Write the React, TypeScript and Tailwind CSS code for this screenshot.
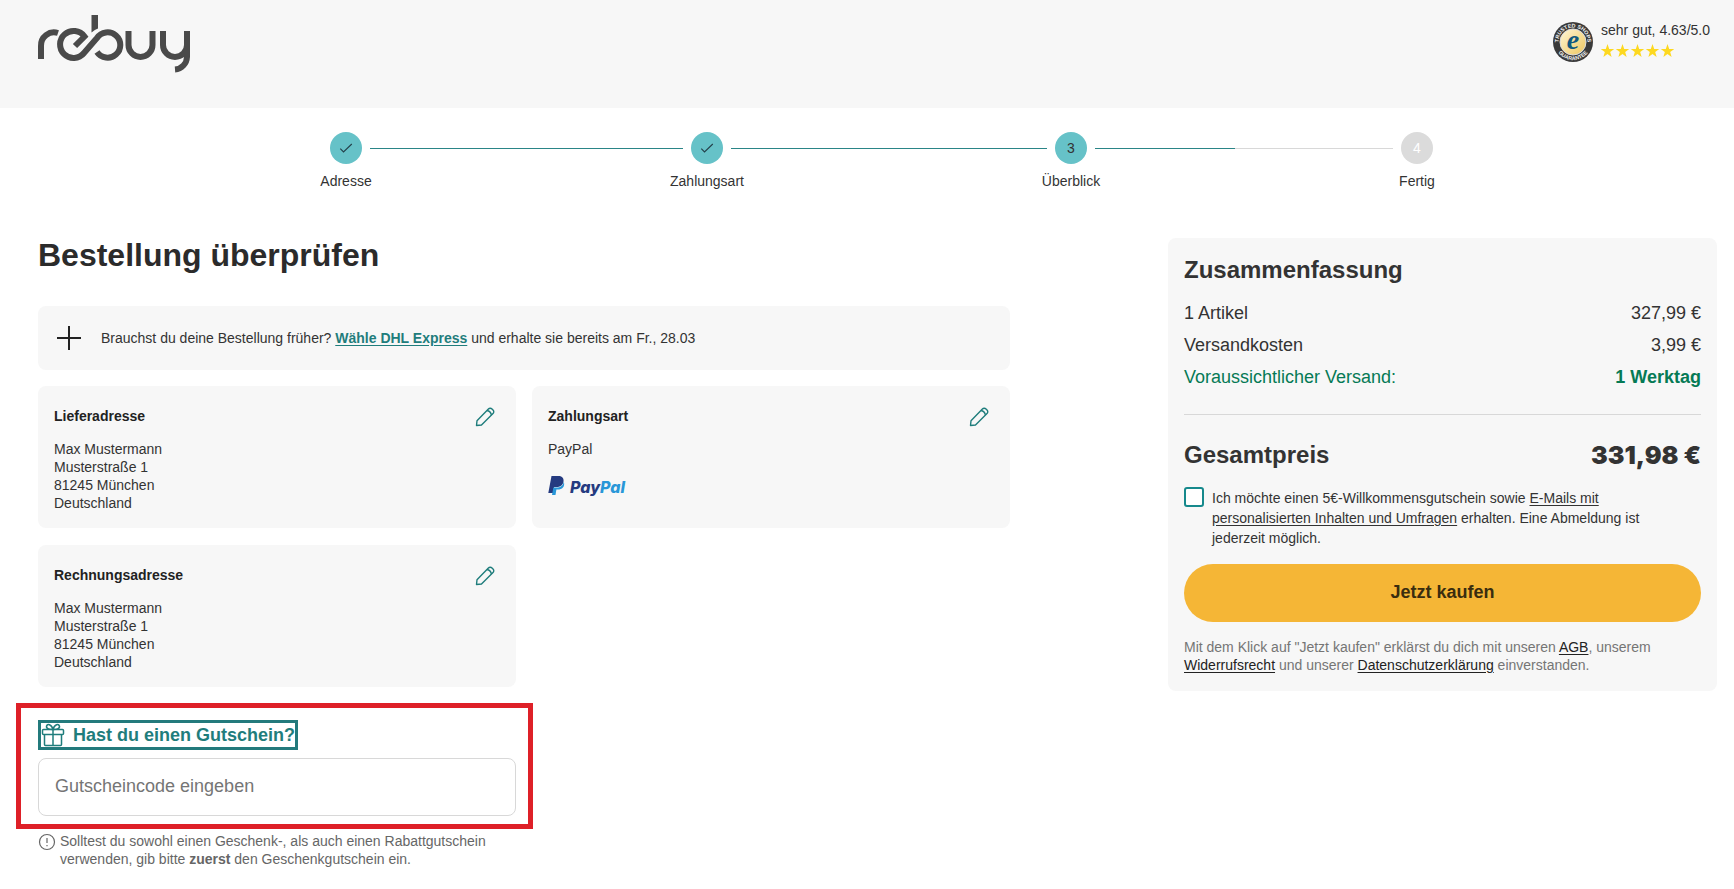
import { useState } from 'react'

const STEPS = [
  { label: 'Adresse', state: 'done', grow: 'grow-[313]' },
  { label: 'Zahlungsart', state: 'done', grow: 'grow-[316]' },
  { label: 'Überblick', state: 'current', grow: 'grow-[298]' },
  { label: 'Fertig', state: 'open', grow: '' },
]

const ADDRESS = ['Max Mustermann', 'Musterstraße 1', '81245 München', 'Deutschland']

function RebuyLogo() {
  return (
    <svg
      className="w-[154px] h-[60px]"
      viewBox="37 14 154 60"
      fill="none"
      stroke="#4a4a4a"
      strokeWidth="6"
      role="img"
      aria-label="rebuy"
    >
      <path d="M41 59V46a13 13 0 0 1 17-13" />
      <path d="M75 46l9.500-9.500A13.500 13.500 0 1 0 84 53L97 38A12.700 12.700 0 1 1 97 52" />
      <path d="M91.500 15h6.500v13.500q-3 1-6.500 4z" fill="#4a4a4a" stroke="none" />
      <path d="M128.500 31v14a12 12 0 0 0 24 0V31" />
      <path d="M163 31v14a12 12 0 0 0 24 0V31M187 45v12a13 13 0 0 1-12 12.500" />
    </svg>
  )
}

function TrustedBadge() {
  return (
    <svg className="w-10 h-10 shrink-0" viewBox="0 0 40 40" role="img" aria-label="Trusted Shops Guarantee">
      <defs>
        <linearGradient id="gold" x1="0" y1="0" x2="1" y2="1">
          <stop offset="0" stopColor="#fff6d8" />
          <stop offset="1" stopColor="#eec65c" />
        </linearGradient>
        <path id="arcTop" d="M6.400 25a14.500 14.500 0 1 1 27.200 0" />
        <path id="arcBottom" d="M1.800 20a18.200 18.200 0 0 0 36.400 0" />
      </defs>
      <circle cx="20" cy="20" r="20" fill="#3a3a3a" />
      <circle cx="20" cy="20" r="13" fill="url(#gold)" stroke="#ddd" />
      <g fill="#f2f2f2" fontFamily="Liberation Sans, sans-serif" fontWeight="700">
        <text fontSize="5.400">
          <textPath href="#arcTop" startOffset="50%" textAnchor="middle">TRUSTED SHOPS</textPath>
        </text>
        <text fontSize="5.400">
          <textPath href="#arcBottom" startOffset="50%" textAnchor="middle">GUARANTEE</textPath>
        </text>
      </g>
      <text x="20" y="27" textAnchor="middle" fontFamily="Liberation Serif, serif" fontStyle="italic" fontWeight="700" fontSize="28" fill="#12597f">
        e
      </text>
    </svg>
  )
}

function Stars() {
  return (
    <svg className="w-[73px] h-[14px]" viewBox="0 0 73 14" fill="#fdd820" role="img" aria-label="5 Sterne">
      {[0, 15, 30, 45, 60].map((x) => (
        <path
          key={x}
          transform={`translate(${x} 0)`}
          d="M6.500 0l1.700 4.900 5 .1-4 3.100 1.400 5-4.100-3-4.100 3 1.400-5-4-3.100 5-.1z"
        />
      ))}
    </svg>
  )
}

function PencilIcon() {
  return (
    <svg className="w-5 h-5" viewBox="0 0 20 20" fill="none" stroke="#1f7d7c" strokeWidth="1.400" strokeLinejoin="round">
      <path d="M1.500 18.500l.5-4.800L13.400 2a2.500 2.500 0 0 1 3.600 0l1 1a2.500 2.500 0 0 1 0 3.600L6.500 18z" />
      <path d="M12 3.500q3.500.5 4.500 4.500" />
    </svg>
  )
}

function GiftIcon() {
  return (
    <svg className="w-6 h-6" viewBox="0 0 24 24" fill="none" stroke="#1f7d7c" strokeWidth="1.500">
      <rect x="1.500" y="6.500" width="21" height="5" rx="1" />
      <path d="M3.500 11.500v10q0 1 1 1h15q1 0 1-1v-10M12 6.500v16" />
      <path d="M12 6.500C9 6.500 5 6 5.500 3.200 6.200.5 10.500.7 12 6.500zM12 6.500c3 0 7-.5 6.500-3.300C17.800.5 13.500.7 12 6.500z" />
    </svg>
  )
}

function PayPalLogo() {
  return (
    <svg className="w-20 h-[22px]" viewBox="0 0 80 22" role="img" aria-label="PayPal">
      <path d="M3.500 1h7c4 0 5.500 2.500 5 5.500-.7 4-3.400 5.500-7 5.500H6.200L5 18H.3z" fill="#253b80" />
      <path d="M15.800 6.500c1.500 5.500-1.800 8-6 8H8.400L7.500 20H4l1.400-7.500h3.200c4 0 6.500-2 7.200-6z" fill="#2997d8" />
      <g fontFamily="Inter, sans-serif" fontStyle="italic" fontWeight="800" fontSize="16">
        <text x="22" y="18" fill="#253b80">
          Pay<tspan fill="#2997d8">Pal</tspan>
        </text>
      </g>
    </svg>
  )
}

function StepBar() {
  return (
    <ol className="flex items-start pl-[322px] pr-[293px] pt-6">
      {STEPS.map((step, i) => (
        <li key={step.label} className={`flex items-start ${step.grow} basis-12`}>
          <div className="w-12 shrink-0 flex flex-col items-center">
            <span
              className={
                step.state === 'open'
                  ? 'w-8 h-8 rounded-full bg-[#dbdbdb] text-white flex items-center justify-center'
                  : 'w-8 h-8 rounded-full bg-[#66c2c8] text-[#333] flex items-center justify-center'
              }
            >
              {step.state === 'done' ? (
                <svg className="w-4 h-4" viewBox="0 0 16 16" fill="none" stroke="#24404a" strokeWidth="1.100">
                  <path d="M2.300 8.700l3.200 3.300 8.300-8" />
                </svg>
              ) : (
                i + 1
              )}
            </span>
            <span className="mt-2 leading-[18px] whitespace-nowrap">{step.label}</span>
          </div>
          {i < STEPS.length - 1 && (
            <div className="mt-4 h-px grow flex bg-[#d8d8d8]">
              <div className={step.state === 'done' ? 'w-full bg-[#2a8587]' : 'w-[47%] bg-[#2a8587]'} />
            </div>
          )}
        </li>
      ))}
    </ol>
  )
}

function Card({ title, children }: { title: string; children: React.ReactNode }) {
  return (
    <section className="h-[142px] rounded-lg bg-[#f7f7f7] px-4 pt-[18px]">
      <div className="flex items-center justify-between h-6 pr-[5px]">
        <h2 className="font-bold text-[#222]">{title}</h2>
        <button type="button" className="mt-px" aria-label={`${title} bearbeiten`}>
          <PencilIcon />
        </button>
      </div>
      <div className="mt-3 leading-[18px]">{children}</div>
    </section>
  )
}

function Address() {
  return (
    <address className="not-italic">
      {ADDRESS.map((line) => (
        <div key={line}>{line}</div>
      ))}
    </address>
  )
}

function Voucher() {
  const [code, setCode] = useState('')

  return (
    <div className="-ml-[22px] mt-4 w-[517px] border-[5px] border-[#de2028] pl-[17px] pr-3 pt-3 pb-2">
      <label
        htmlFor="voucher"
        className="flex w-fit items-center gap-2 h-[30px] border-[3px] border-[#237a7c] text-lg leading-6 font-bold text-[#1f7d7c]"
      >
        <GiftIcon />
        Hast du einen Gutschein?
      </label>
      <input
        id="voucher"
        value={code}
        onChange={(e) => setCode(e.target.value)}
        placeholder="Gutscheincode eingeben"
        className="mt-2 block w-full h-[58px] rounded-lg border border-[#d8d8d8] bg-white px-4 pb-0.5 text-lg placeholder:text-[#757575]"
      />
    </div>
  )
}

function Summary() {
  const [newsletter, setNewsletter] = useState(false)

  return (
    <aside className="w-[549px] shrink-0 rounded-lg bg-[#f7f7f7] px-4 pt-4 pb-[17px]">
      <h2 className="text-2xl font-bold leading-8">Zusammenfassung</h2>
      <dl className="mt-[11px] text-lg leading-8">
        <div className="flex justify-between">
          <dt>1 Artikel</dt>
          <dd>327,99 €</dd>
        </div>
        <div className="flex justify-between">
          <dt>Versandkosten</dt>
          <dd>3,99 €</dd>
        </div>
        <div className="flex justify-between text-[#057a55]">
          <dt>Voraussichtlicher Versand:</dt>
          <dd className="font-bold">1 Werktag</dd>
        </div>
      </dl>
      <hr className="mt-[21px] border-[#d8d8d8]" />
      <div className="mt-6 flex justify-between text-2xl leading-8 font-bold">
        <span>Gesamtpreis</span>
        <span className="font-['Inter',sans-serif] text-[25px] font-black">331,98 €</span>
      </div>

      <div className="mt-4 flex items-start gap-2">
        <input
          id="newsletter"
          type="checkbox"
          checked={newsletter}
          onChange={(e) => setNewsletter(e.target.checked)}
          className="appearance-none w-5 h-5 shrink-0 rounded-[3px] border-2 border-[#16898c] bg-white checked:bg-[#16898c]"
        />
        <label htmlFor="newsletter" className="mt-px max-w-[440px] leading-5">
          Ich möchte einen 5€-Willkommensgutschein sowie{' '}
          <a href="#emails" className="underline underline-offset-2">
            E-Mails mit personalisierten Inhalten und Umfragen
          </a>{' '}
          erhalten. Eine Abmeldung ist jederzeit möglich.
        </label>
      </div>

      <button
        type="button"
        className="mt-4 w-full h-[58px] rounded-full bg-[#f5b636] pb-0.5 text-lg font-bold text-[#3a2d0f]"
      >
        Jetzt kaufen
      </button>

      <p className="mt-4 leading-[18px] text-[#757575]">
        Mit dem Klick auf "Jetzt kaufen" erklärst du dich mit unseren{' '}
        <a href="#agb" className="text-[#222] underline underline-offset-2">AGB</a>, unserem{' '}
        <a href="#widerruf" className="text-[#222] underline underline-offset-2">Widerrufsrecht</a> und unserer{' '}
        <a href="#datenschutz" className="text-[#222] underline underline-offset-2">Datenschutzerklärung</a>{' '}
        einverstanden.
      </p>
    </aside>
  )
}

export default function App() {
  return (
    <div className="bg-white pb-5 font-['Liberation_Sans',Arial,sans-serif] text-sm text-[#333]">
      <header className="h-[108px] bg-[#f7f7f7] pl-[37px] pr-6 pt-[14px] flex items-start justify-between">
        <RebuyLogo />
        <div className="mt-2 flex items-start gap-2">
          <TrustedBadge />
          <div className="flex flex-col gap-[5px]">
            <span className="leading-[18px] -mt-px">sehr gut, 4.63/5.0</span>
            <Stars />
          </div>
        </div>
      </header>

      <StepBar />

      <main className="mt-12 flex items-start justify-between pl-[38px] pr-[17px]">
        <div className="w-[972px]">
          <h1 className="text-[32px] leading-[34px] font-bold text-[#2b2b2b]">Bestellung überprüfen</h1>

          <div className="mt-[34px] flex h-16 items-center rounded-lg bg-[#f7f7f7] pl-[19px]">
            <svg className="w-6 h-6" viewBox="0 0 24 24" stroke="#222" strokeWidth="2">
              <path d="M12 0v24M0 12h24" />
            </svg>
            <p className="ml-5">
              Brauchst du deine Bestellung früher?{' '}
              <a href="#express" className="font-bold text-[#1f7d7c] underline underline-offset-2">
                Wähle DHL Express
              </a>{' '}
              und erhalte sie bereits am Fr., 28.03
            </p>
          </div>

          <div className="mt-4 grid grid-cols-2 gap-x-4 gap-y-[17px]">
            <Card title="Lieferadresse">
              <Address />
            </Card>
            <Card title="Zahlungsart">
              <p>PayPal</p>
              <div className="mt-[17px]">
                <PayPalLogo />
              </div>
            </Card>
            <Card title="Rechnungsadresse">
              <Address />
            </Card>
          </div>

          <Voucher />

          <div className="mt-[3px] flex w-[478px] gap-1 leading-[18px] text-[#666]">
            <svg className="mt-px w-[18px] h-[18px] shrink-0" viewBox="0 0 18 18" fill="none" stroke="#666" strokeWidth="1.200">
              <circle cx="9" cy="9" r="7.500" />
              <path d="M9 5v5M9 12v1.300" />
            </svg>
            <p className="max-w-[440px]">
              Solltest du sowohl einen Geschenk-, als auch einen Rabattgutschein verwenden, gib bitte{' '}
              <strong>zuerst</strong> den Geschenkgutschein ein.
            </p>
          </div>
        </div>

        <Summary />
      </main>
    </div>
  )
}
